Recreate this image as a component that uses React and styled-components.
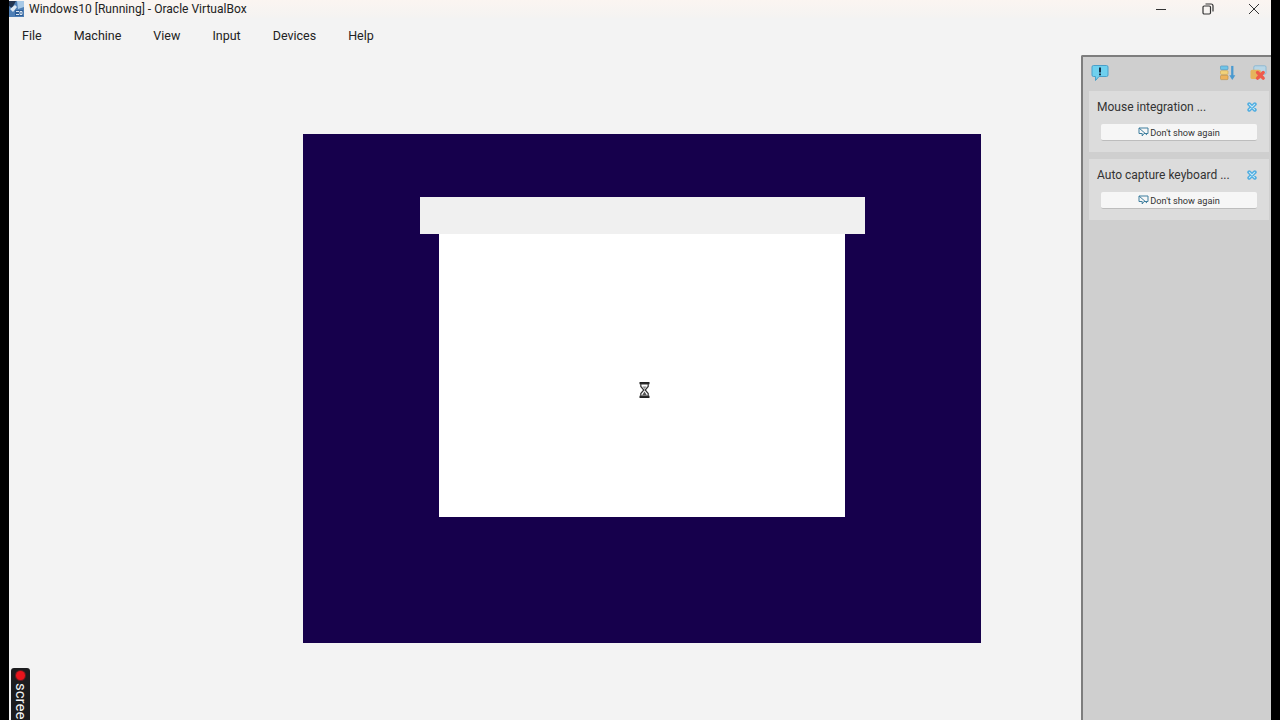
import React from 'react'
import styled, { createGlobalStyle } from 'styled-components'

const GlobalStyle = createGlobalStyle`
  html, body {
    margin: 0;
    height: 100%;
    overflow: hidden;
    background: #000;
    font-family: Roboto, "Noto Sans", sans-serif;
  }
`

function AppIcon() {
  return (
    <svg width="15" height="17" viewBox="0 0 15 17">
      <rect x="0" y="0" width="15" height="16" fill="#4f7fb5" />
      <path d="M0 0h7L3 7 0 5z" fill="#23344f" />
      <path d="M8 0h7v6L9 8z" fill="#a9c9e6" />
      <path d="M1 8l5-4 2 2-4 5z" fill="#dfe9f3" />
      <rect x="6" y="9" width="8" height="6" fill="#2e5f99" />
      <path d="M7 10.5h3M7 13.5h3M11 10.5h2v3h-2z" stroke="#dfe9f3" strokeWidth="1" fill="none" />
    </svg>
  )
}

function Minimize() {
  return (
    <svg width="12" height="12" viewBox="0 0 12 12">
      <path d="M1 6.5h10" stroke="#333" strokeWidth="1" />
    </svg>
  )
}

function Restore() {
  return (
    <svg width="12" height="12" viewBox="0 0 12 12" fill="none" stroke="#333" strokeWidth="1.2">
      <rect x="1" y="3" width="7.5" height="8" rx="1.2" />
      <path d="M3.5 1h5.5a2 2 0 0 1 2 2v5.5" />
    </svg>
  )
}

function CloseWin() {
  return (
    <svg width="12" height="12" viewBox="0 0 12 12">
      <path d="M1 1l10 10M11 1L1 11" stroke="#333" strokeWidth="1" />
    </svg>
  )
}

function BubbleIcon() {
  return (
    <svg width="18" height="18" viewBox="0 0 18 18">
      <path d="M2.5 1.5h13a1.5 1.5 0 0 1 1.5 1.5v8a1.5 1.5 0 0 1-1.5 1.5H8l-3.5 4v-4h-2A1.5 1.5 0 0 1 1 11V3a1.5 1.5 0 0 1 1.5-1.5z" fill="#6fd0ee" stroke="#4a9fc9" strokeWidth="1" />
      <rect x="8" y="3.5" width="2" height="5" fill="#17324a" />
      <rect x="8" y="9.5" width="2" height="1.8" fill="#17324a" />
    </svg>
  )
}

function SortIcon() {
  return (
    <svg width="17" height="16" viewBox="0 0 18 16">
      <rect x="0.5" y="0.5" width="8" height="4" rx="1" fill="#6fc4e8" stroke="#4b8fb8" strokeWidth="0.6" />
      <rect x="0.5" y="5.5" width="8" height="4" rx="1" fill="#f2d27a" stroke="#c9a24d" strokeWidth="0.6" />
      <rect x="0.5" y="10.5" width="8" height="4.5" rx="1" fill="#eeb25a" stroke="#b98a3e" strokeWidth="0.6" />
      <path d="M13 0.5v12" stroke="#4a9ad0" strokeWidth="2.4" />
      <path d="M9.8 10.5L13 15.5l3.2-5z" fill="#4a9ad0" />
    </svg>
  )
}

function CloseAllIcon() {
  return (
    <svg width="17" height="16" viewBox="0 0 18 17">
      <rect x="4" y="0.8" width="13" height="9" rx="1.5" fill="#b8d6e6" stroke="#7fb2cf" strokeWidth="0.8" />
      <rect x="0.5" y="5" width="11" height="10" rx="2" fill="#e6b45c" />
      <path d="M8 8l6 6M14 8l-6 6" stroke="#ef5a4a" strokeWidth="3.6" strokeLinecap="round" />
    </svg>
  )
}

function SmallClose() {
  return (
    <svg width="10" height="10" viewBox="0 0 10 10">
      <path d="M2.2 2.2l5.6 5.6M7.8 2.2L2.2 7.8" stroke="#52aee0" strokeWidth="3.8" strokeLinecap="round" />
      <path d="M2.4 2.4l5.2 5.2M7.6 2.4L2.4 7.6" stroke="#c6e8f8" strokeWidth="1.1" strokeLinecap="round" />
    </svg>
  )
}

function NoShowIcon() {
  return (
    <svg width="11" height="10" viewBox="0 0 11 10" fill="none">
      <path d="M1 1h9v5.5H6L4.2 9V6.5H1z" stroke="#3f7f9f" strokeWidth="1" />
      <path d="M1 1l8 7" stroke="#3f7f9f" strokeWidth="1" />
    </svg>
  )
}

function Hourglass() {
  return (
    <svg width="11" height="16" viewBox="0 0 11 16">
      <path d="M0.5 1.2h10M0.5 14.8h10" stroke="#222" strokeWidth="2.2" />
      <path d="M1.8 2v2.5l3 3.5-3 3.5V14h7.4v-2.5l-3-3.5 3-3.5V2z" fill="#fff" stroke="#333" strokeWidth="1.2" />
      <path d="M3 13.5L5.5 9.5l2.5 4z" fill="#555" />
      <path d="M3.5 4.5h4L5.5 7z" fill="#888" />
    </svg>
  )
}

const menuItems = ['File', 'Machine', 'View', 'Input', 'Devices', 'Help']
const notices = ['Mouse integration ...', 'Auto capture keyboard ...']

export default function App() {
  return (
    <>
      <GlobalStyle />
      <Page>
        <Strip />
        <Window>
          <TitleBar>
            <AppIcon />
            <Title>Windows10 [Running] - Oracle VirtualBox</Title>
            <WinButtons>
              <Minimize />
              <Restore />
              <CloseWin />
            </WinButtons>
          </TitleBar>
          <MenuBar>
            {menuItems.map((item) => (
              <MenuItem key={item}>{item}</MenuItem>
            ))}
          </MenuBar>
          <Body>
            <Main>
              <GuestScreen>
                <SplashBar />
                <SplashBody />
                <Cursor>
                  <Hourglass />
                </Cursor>
              </GuestScreen>
            </Main>
            <Panel>
              <PanelHead>
                <BubbleIcon />
                <PanelTools>
                  <SortIcon />
                  <CloseAllIcon />
                </PanelTools>
              </PanelHead>
              <NoticeList>
                {notices.map((text) => (
                  <Notice key={text}>
                    <NoticeTop>
                      <NoticeText>{text}</NoticeText>
                      <SmallClose />
                    </NoticeTop>
                    <DontShow>
                      <NoShowIcon />
                      Don't show again
                    </DontShow>
                  </Notice>
                ))}
              </NoticeList>
            </Panel>
          </Body>
          <RecorderBadge>
            <RecDot />
            <RecLabel>scree</RecLabel>
          </RecorderBadge>
        </Window>
        <Strip />
      </Page>
    </>
  )
}

const Page = styled.div`
  display: flex;
  width: 1280px;
  height: 720px;
  overflow: hidden;
`

const Strip = styled.div`
  flex: 0 0 9px;
  background: #000;
`

const Window = styled.div`
  position: relative;
  flex: 1;
  display: flex;
  flex-direction: column;
  min-width: 0;
  background: #f3f3f3;
  overflow: hidden;
`

const TitleBar = styled.div`
  flex: 0 0 18px;
  display: flex;
  align-items: center;
  gap: 5px;
  background: linear-gradient(#fbf5f1, #f4f3f2);
`

const Title = styled.span`
  font-size: 12.05px;
  color: #222;
  white-space: nowrap;
`

const WinButtons = styled.div`
  margin-left: auto;
  display: flex;
  align-items: center;
  gap: 34.5px;
  padding-right: 11px;
`

const MenuBar = styled.div`
  flex: 0 0 37px;
  display: flex;
  align-items: center;
  gap: 32px;
  padding: 0 0 2px 13px;
  box-sizing: border-box;
`

const MenuItem = styled.span`
  font-size: 12.5px;
  color: #222;
`

const Body = styled.div`
  flex: 1;
  display: flex;
  min-height: 0;
`

const Main = styled.div`
  flex: 1;
  padding: 79px 0 0 294px;
`

const GuestScreen = styled.div`
  position: relative;
  width: 678px;
  height: 509px;
  padding-top: 63px;
  box-sizing: border-box;
  display: flex;
  flex-direction: column;
  align-items: center;
  background: #16004c;
`

const SplashBar = styled.div`
  width: 445px;
  height: 37px;
  margin-left: 1px;
  background: #f0f0f0;
`

const SplashBody = styled.div`
  width: 406px;
  height: 283px;
  background: #fff;
`

const Cursor = styled.div`
  position: absolute;
  left: 336px;
  top: 248px;
  display: flex;
`

const Panel = styled.div`
  flex: 0 0 190px;
  display: flex;
  flex-direction: column;
  box-sizing: border-box;
  background: #cfcfcf;
  border-left: 2px solid #7d7d7d;
  border-top: 2px solid #7d7d7d;
  border-top-left-radius: 2px;
`

const PanelHead = styled.div`
  flex: 0 0 31px;
  display: flex;
  align-items: center;
  justify-content: space-between;
  padding: 0 4px 0 8px;
`

const PanelTools = styled.div`
  display: flex;
  align-items: center;
  gap: 13px;
`

const NoticeList = styled.div`
  display: flex;
  flex-direction: column;
  gap: 7px;
  padding: 0 2px 0 6px;
  margin-top: 3px;
`

const Notice = styled.div`
  display: flex;
  flex-direction: column;
  height: 61px;
  box-sizing: border-box;
  padding: 7px 12px 0 8px;
  background: #dcdcdc;
`

const NoticeTop = styled.div`
  display: flex;
  align-items: center;
  justify-content: space-between;
  height: 18px;
`

const NoticeText = styled.span`
  font-size: 12px;
  color: #333;
`

const DontShow = styled.div`
  margin: 8px 0 0 4px;
  height: 16px;
  display: flex;
  align-items: center;
  justify-content: center;
  gap: 1px;
  font-size: 9.2px;
  color: #333;
  background: #f6f6f6;
  border-bottom: 1px solid #bdbdbd;
  border-radius: 2px;
`

const RecorderBadge = styled.div`
  position: absolute;
  left: 2px;
  top: 668px;
  width: 19px;
  height: 52px;
  box-sizing: border-box;
  padding-top: 3px;
  display: flex;
  flex-direction: column;
  align-items: center;
  gap: 3px;
  background: #1c1c1e;
  border-radius: 3px 3px 0 0;
  overflow: hidden;
`

const RecDot = styled.span`
  flex: none;
  width: 9px;
  height: 9px;
  border-radius: 50%;
  background: #e8141c;
  box-shadow: 0 0 0 1px #6a1a1e;
`

const RecLabel = styled.span`
  writing-mode: vertical-rl;
  font-size: 15px;
  line-height: 19px;
  color: #f4f4f4;
`
